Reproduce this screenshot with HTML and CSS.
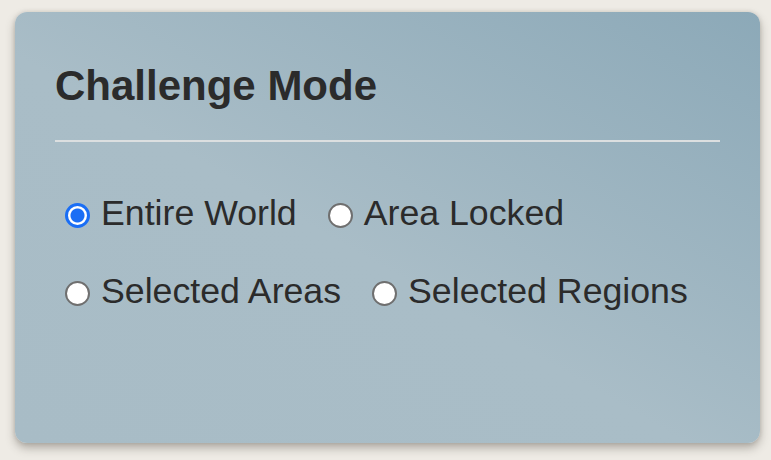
FILE: index.html
```html
<!DOCTYPE html>
<html lang="en">
<head>
<meta charset="utf-8">
<title>Challenge Mode</title>
<link rel="stylesheet" href="styles.css">
</head>
<body>
<main class="card">
  <h2 class="title">Challenge Mode</h2>
  <hr class="divider">
  <div class="options">
    <div class="row">
      <label class="option"><input type="radio" name="mode" class="radio" checked><span>Entire World</span></label>
      <label class="option"><input type="radio" name="mode" class="radio"><span>Area Locked</span></label>
    </div>
    <div class="row">
      <label class="option"><input type="radio" name="mode" class="radio"><span>Selected Areas</span></label>
      <label class="option"><input type="radio" name="mode" class="radio"><span>Selected Regions</span></label>
    </div>
  </div>
</main>
</body>
</html>
```

FILE: styles.css
```css
html, body {
  margin: 0;
  padding: 0;
}
body {
  background: #eeebe5;
  font-family: "Liberation Sans", Arial, sans-serif;
  color: #2b2b2b;
  padding: 12px 11px 0 15px;
  height: 460px;
  box-sizing: border-box;
}
.card {
  height: 431px;
  box-sizing: border-box;
  border-radius: 12px;
  background: linear-gradient(to bottom left, #8ca9b8 0%, #a9bdc7 55%, #a8bcc6 100%);
  box-shadow: 0 5px 10px rgba(60, 55, 45, 0.35), 0 0 4px rgba(60, 55, 45, 0.15);
  padding: 50px 40px 40px 40px;
}
.title {
  margin: 0;
  font-size: 42px;
  font-weight: bold;
  line-height: 48px;
  color: #2b2b2b;
}
.divider {
  margin: 30px 0 0 0;
  border: 0;
  height: 2px;
  background: #dcdfe0;
}
.options {
  display: flex;
  flex-direction: column;
  gap: 37px;
  margin-top: 53px;
  padding-left: 10px;
}
.row {
  display: flex;
  gap: 31px;
}
.option {
  display: flex;
  align-items: center;
  gap: 11px;
  font-size: 35.7px;
  line-height: 41px;
  color: #2b2b2b;
}
.option span {
  position: relative;
  top: -2px;
}
.radio {
  appearance: none;
  -webkit-appearance: none;
  margin: 0;
  width: 25px;
  height: 25px;
  border-radius: 50%;
  box-sizing: border-box;
  border: 2px solid #6f6f6f;
  background: #ffffff;
  flex: none;
}
.radio:checked {
  border: 3px solid #1a6ef5;
  background: radial-gradient(circle, #1a6ef5 0 6.5px, #ffffff 7.5px);
}
```
